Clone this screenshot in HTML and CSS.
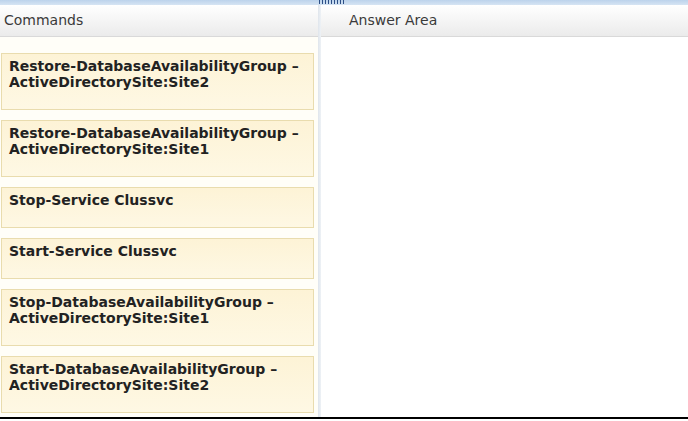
FILE: index.html
```html
<!DOCTYPE html>
<html lang="en">

<head>
    <meta charset="UTF-8">
    <title>Commands - Answer Area</title>
    <link rel="stylesheet" href="styles.css">
</head>

<body>
    <div class="top-band">
        <div class="grip"></div>
    </div>
    <div class="workspace">
        <div class="column commands">
            <div class="column-header">Commands</div>
            <div class="card-list">
                <div class="card">Restore-DatabaseAvailabilityGroup –<br>ActiveDirectorySite:Site2</div>
                <div class="card">Restore-DatabaseAvailabilityGroup –<br>ActiveDirectorySite:Site1</div>
                <div class="card">Stop-Service Clussvc</div>
                <div class="card">Start-Service Clussvc</div>
                <div class="card">Stop-DatabaseAvailabilityGroup –<br>ActiveDirectorySite:Site1</div>
                <div class="card">Start-DatabaseAvailabilityGroup –<br>ActiveDirectorySite:Site2</div>
            </div>
        </div>
        <div class="divider"></div>
        <div class="column answers">
            <div class="column-header">Answer Area</div>
        </div>
    </div>
    <div class="bottom-rule"></div>
</body>

</html>
```

FILE: styles.css
```css
body {
    margin: 0;
    width: 688px;
    height: 421px;
    overflow: hidden;
    background-color: #fff;
    font-family: 'DejaVu Sans', Verdana, sans-serif;
}

.top-band {
    height: 5px;
    background: linear-gradient(#bcd3ec, #d6e4f3);
    display: flex;
}

/* little dotted drag handle over the divider */
.grip {
    margin-left: 318px;
    width: 27px;
    height: 4px;
    background-image: radial-gradient(circle, #2d4f86 40%, transparent 60%);
    background-size: 3px 2px;
}

.workspace {
    display: flex;
    height: 412px;
}

.column {
    display: flex;
    flex-direction: column;
}

.commands {
    width: 318px;
    background-color: #fffef8;
}

.answers {
    flex: 1;
    background-color: #fff;
}

.divider {
    width: 3px;
    background: linear-gradient(90deg, #dfe5ec, #eef2f6);
}

.column-header {
    height: 31px;
    line-height: 31px;
    font-size: 14px;
    color: #3a3a3a;
    padding-left: 4px;
    background: linear-gradient(#ffffff, #ebebeb);
    border-bottom: 1px solid #d9d9d9;
}

.answers .column-header {
    padding-left: 28px;
}

.card-list {
    display: flex;
    flex-direction: column;
    gap: 10px;
    padding: 16px 4px 0 1px;
}

.card {
    padding: 4px 6px 19px 7px;
    font-size: 14px;
    font-weight: bold;
    line-height: 16px;
    color: #222;
    background: linear-gradient(#fdf3d6, #fef8e4);
    border: 1px solid #e9dcae;
}

.bottom-rule {
    height: 2px;
    background-color: #000;
}
```
